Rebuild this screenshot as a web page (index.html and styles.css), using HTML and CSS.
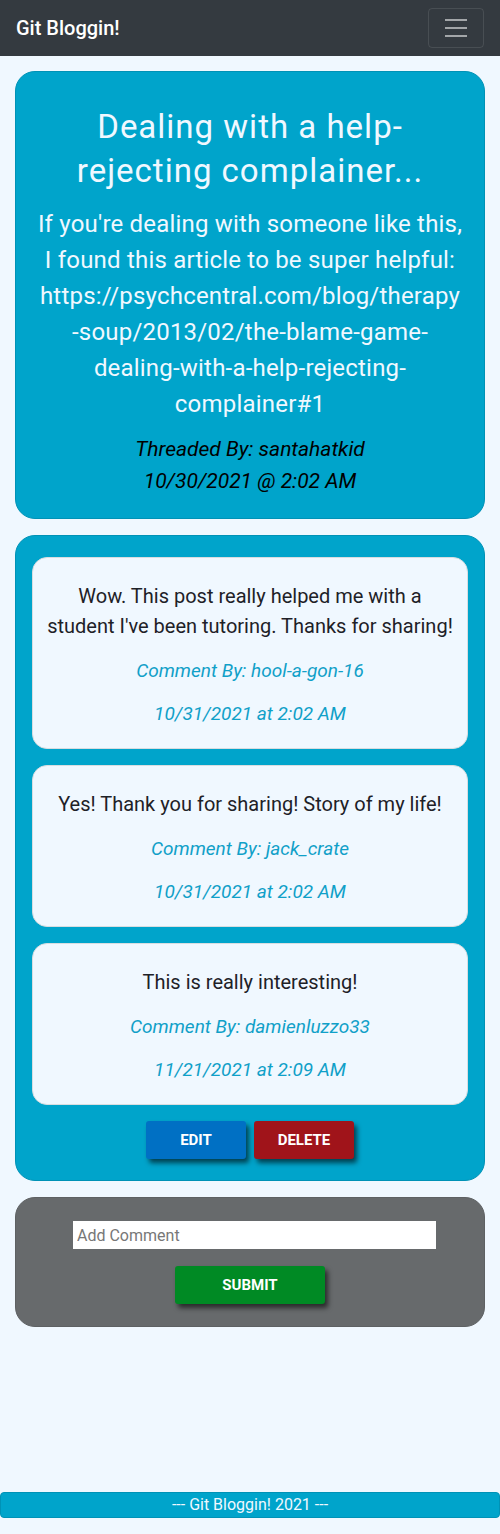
FILE: index.html
```html
<!DOCTYPE html>
<html lang="en">
<head>
<meta charset="utf-8">
<title>Git Bloggin!</title>
<link rel="stylesheet" href="styles.css">
</head>
<body>
<nav class="navbar">
  <a class="brand" href="#">Git Bloggin!</a>
  <button class="toggler" type="button" aria-label="Toggle navigation">
    <svg width="30" height="30" viewBox="0 0 30 30"><path d="M4 7h22M4 15h22M4 23h22" stroke="rgba(255,255,255,0.55)" stroke-width="2" stroke-linecap="butt"/></svg>
  </button>
</nav>
<main class="main">
  <section class="card thread">
    <h1 class="thread-title">Dealing with a help-<br>rejecting complainer...</h1>
    <p class="thread-body">If you're dealing with someone like this,<br>I found this article to be super helpful:<br>https://psychcentral.com/blog/therapy<br>-soup/2013/02/the-blame-game-<br>dealing-with-a-help-rejecting-<br>complainer#1</p>
    <p class="thread-meta">Threaded By: santahatkid</p>
    <p class="thread-meta">10/30/2021 @ 2:02 AM</p>
  </section>
  <section class="card comments">
    <div class="comment">
      <p class="comment-text">Wow. This post really helped me with a<br>student I've been tutoring. Thanks for sharing!</p>
      <p class="comment-meta">Comment By: hool-a-gon-16</p>
      <p class="comment-meta">10/31/2021 at 2:02 AM</p>
    </div>
    <div class="comment">
      <p class="comment-text">Yes! Thank you for sharing! Story of my life!</p>
      <p class="comment-meta">Comment By: jack_crate</p>
      <p class="comment-meta">10/31/2021 at 2:02 AM</p>
    </div>
    <div class="comment">
      <p class="comment-text">This is really interesting!</p>
      <p class="comment-meta">Comment By: damienluzzo33</p>
      <p class="comment-meta">11/21/2021 at 2:09 AM</p>
    </div>
    <div class="actions">
      <button class="btn btn-edit" type="button">EDIT</button>
      <button class="btn btn-delete" type="button">DELETE</button>
    </div>
  </section>
  <section class="card form-card">
    <form class="comment-form">
      <input class="comment-input" type="text" placeholder="Add Comment">
      <button class="btn btn-submit" type="submit">SUBMIT</button>
    </form>
  </section>
</main>
<footer class="footer">--- Git Bloggin! 2021 ---</footer>
</body>
</html>
```
FILE: styles.css
```css
html, body {
  margin: 0;
}
body {
  background: #f0f8ff;
  font-family: Roboto, "Liberation Sans", Arial, sans-serif;
  min-height: 100vh;
  display: flex;
  flex-direction: column;
  color: #212529;
}
.navbar {
  height: 56px;
  box-sizing: border-box;
  padding: 0 16px;
  background: #343a40;
  display: flex;
  align-items: center;
  justify-content: space-between;
}
.brand {
  color: #fff;
  font-size: 20px;
  font-weight: 500;
  text-decoration: none;
}
.toggler {
  width: 56px;
  height: 40px;
  padding: 0;
  border: 1px solid rgba(255,255,255,0.1);
  border-radius: 4px;
  background: transparent;
  display: flex;
  align-items: center;
  justify-content: center;
}
.toggler svg { display: block; }
.main {
  flex: 1;
  padding: 15px 15px 0;
  display: flex;
  flex-direction: column;
  gap: 16px;
}
.card {
  background: #00a4cb;
  border: 1px solid #0092b6;
  border-radius: 20px;
}
.thread {
  padding: 20px 16px 21px;
  text-align: center;
  color: #f0f8ff;
  overflow-wrap: break-word;
}
.thread-title {
  margin: 13px 0 13px;
  font-size: 33px;
  font-weight: 400;
  line-height: 44px;
  letter-spacing: 1px;
}
.thread-body {
  margin: 0 0 11px;
  font-size: 24px;
  line-height: 36px;
  letter-spacing: 0.2px;
}
.thread-meta {
  margin: 0;
  color: #000;
  font-style: italic;
  font-size: 21px;
  line-height: 32px;
}
.comments {
  padding: 21px 16px 21px;
  display: flex;
  flex-direction: column;
  gap: 16px;
}
.comment {
  background: #f0f8ff;
  border: 1px solid #d8dde0;
  border-radius: 15px;
  padding: 23px 4px 5px;
  text-align: center;
}
.comment p { margin: 0 0 16px; }
.comment-text {
  font-size: 20px;
  line-height: 30px;
  color: #1e2127;
}
.comment-meta {
  font-size: 19px;
  line-height: 27px;
  font-style: italic;
  color: #10a0c8;
}
.actions {
  display: flex;
  justify-content: center;
  gap: 8px;
}
.btn {
  border: none;
  border-radius: 3px;
  color: #fff;
  font-family: inherit;
  font-weight: 700;
  font-size: 15px;
  height: 38px;
  box-shadow: 3px 4px 5px rgba(0,0,0,0.6);
  cursor: pointer;
}
.btn-edit { width: 100px; background: #0070c4; }
.btn-delete { width: 100px; background: #a0141a; }
.form-card {
  background: #676a6c;
  border-color: #5e6163;
  padding: 23px 16px 22px;
}
.comment-form {
  display: flex;
  flex-direction: column;
  align-items: center;
  gap: 17px;
}
.comment-input {
  width: 363px;
  height: 28px;
  margin-left: 9px;
  box-sizing: border-box;
  border: none;
  padding: 0 4px;
  font-family: inherit;
  font-size: 16px;
  background: #fff;
  color: #333;
}
.comment-input::placeholder { color: #777; }
.btn-submit { width: 150px; background: #008a24; }
.footer {
  margin: 0 0 16px;
  height: 26px;
  box-sizing: border-box;
  background: #00a4cb;
  border: 1px solid #0092b6;
  border-radius: 4px;
  color: #f0f8ff;
  font-size: 16px;
  line-height: 24px;
  text-align: center;
}
```
